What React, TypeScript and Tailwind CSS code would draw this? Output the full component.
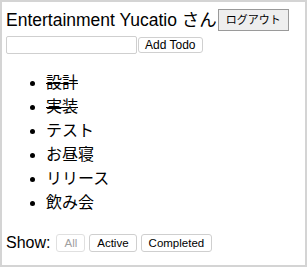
import React from "react";

const todos = [
  { text: "設計", done: true },
  { text: "実装", done: true },
  { text: "テスト", done: false },
  { text: "お昼寝", done: false },
  { text: "リリース", done: false },
  { text: "飲み会", done: false },
];

export default function App() {
  const font = { fontFamily: '"Liberation Sans", "Noto Sans CJK JP", sans-serif' };
  return (
    <div
      className="w-[307px] h-[267px] bg-white border-2 border-[#d4d4d4] text-black overflow-hidden"
      style={font}
    >
      <div className="pl-[4px] pt-[7px] flex flex-col">
        <div className="flex items-start h-[26px]">
          <span className="text-[17.5px] leading-[22px]">Entertainment Yucatio さん</span>
          <button className="ml-[1px] h-[22px] px-[7px] bg-[#eeeeee] border border-[#9a9a9a] text-[11px] leading-[18px]">
            ログアウト
          </button>
        </div>
        <div className="flex items-center h-[20px]">
          <input className="w-[131px] h-[18px] border border-[#cfcfcf] rounded-[2px] bg-white" />
          <button className="ml-[1px] h-[16px] px-[6px] bg-white border border-[#d0d0d0] rounded-[3px] text-[12px] leading-[14px]">
            Add Todo
          </button>
        </div>
        <ul className="list-disc pl-[40px] mt-[16px]">
          {todos.map((t) => (
            <li key={t.text} className={`text-[16px] leading-[24px] ${t.done ? "line-through" : ""}`}>
              {t.text}
            </li>
          ))}
        </ul>
        <div className="flex items-center mt-[18px]">
          <span className="text-[16px] leading-[20px]">Show:</span>
          <button disabled className="ml-[6px] h-[18px] px-[7px] bg-white border border-[#e0e0e0] rounded-[3px] text-[11.5px] leading-[16px] text-[#a0a0a0]">
            All
          </button>
          <button className="ml-[4px] h-[18px] px-[7px] bg-white border border-[#cfcfcf] rounded-[3px] text-[11.5px] leading-[16px]">
            Active
          </button>
          <button className="ml-[4px] h-[18px] px-[7px] bg-white border border-[#cfcfcf] rounded-[3px] text-[11.5px] leading-[16px]">
            Completed
          </button>
        </div>
      </div>
    </div>
  );
}
